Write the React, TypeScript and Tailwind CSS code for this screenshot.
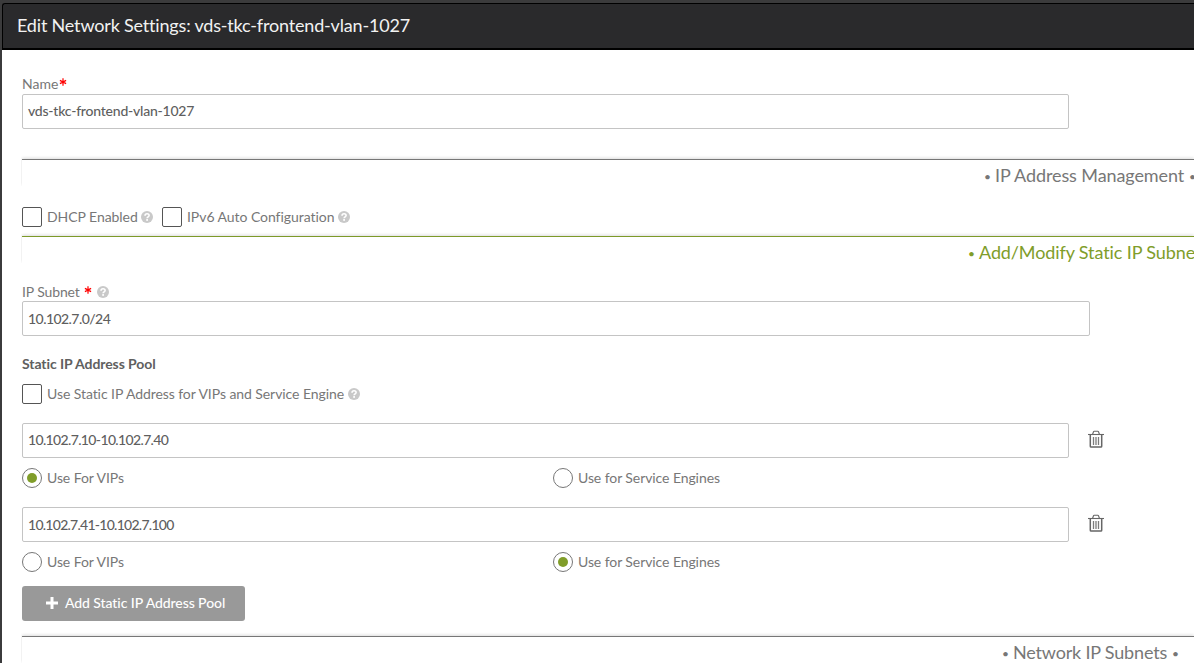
import type { ReactNode } from "react";

function Help({ className = "" }: { className?: string }) {
  return (
    <svg className={`h-[12px] w-[12px] shrink-0 ${className}`} viewBox="0 0 12 12">
      <circle cx="6" cy="6" r="6" fill="#c9c9c9" />
      <path d="M4 4.7C4.1 2.2 8.1 2.2 8.1 4.5C8.1 5.9 6.1 5.9 6.1 7.3" fill="none" stroke="#fff" strokeWidth="1.6" />
      <rect x="5.2" y="8.1" width="1.8" height="1.7" fill="#fff" />
    </svg>
  );
}

function Trash() {
  return (
    <svg className="mb-[3px] h-[18px] w-[16px] shrink-0" viewBox="0 0 16 18" fill="none" stroke="#666">
      <path d="M0 4.5H16" strokeWidth="1.1" />
      <path d="M4.6 4.2L5.5 1.8Q5.7 1.3 6.2 1.3H9.8Q10.3 1.3 10.5 1.8L11.4 4.2" strokeWidth="1.1" />
      <path d="M2.3 4.5V16.2Q2.3 17 3.1 17H12.9Q13.7 17 13.7 16.2V4.5" strokeWidth="1.5" />
      <path d="M5.5 7V15M8 7V15M10.5 7V15" strokeWidth="1.3" stroke="#7c7c7c" />
    </svg>
  );
}

function Asterisk({ className = "" }: { className?: string }) {
  return (
    <svg className={`h-[8px] w-[8px] shrink-0 ${className}`} viewBox="0 0 8 8" stroke="#f00" strokeWidth="1.2">
      <path d="M4 .3V7.7M.9 2.4L7.1 5.6M7.1 2.4L.9 5.6" />
    </svg>
  );
}

function Field({ value, className = "" }: { value: string; className?: string }) {
  return (
    <div className={`flex h-[35px] shrink-0 items-center rounded-[2px] border border-[#c4c4c4] bg-white pl-[5px] text-[14px] font-medium text-[#5f5f5f] ${className}`}>
      {value}
    </div>
  );
}

function Box() {
  return <span className="mr-[5px] h-[20px] w-[20px] shrink-0 rounded-[2px] border border-[#555] bg-white" />;
}

function Radio({ on, children, className = "" }: { on: boolean; children: ReactNode; className?: string }) {
  return (
    <div className={`flex shrink-0 items-center ${className}`}>
      <span className="mr-[5px] flex h-[20px] w-[20px] shrink-0 items-center justify-center rounded-full border border-[#777]">
        {on && <span className="h-[10px] w-[10px] rounded-full bg-[#809d2a]" />}
      </span>
      <span className="pb-[2px] tracking-[-0.08px]">{children}</span>
    </div>
  );
}

function Section({ children, className }: { children: ReactNode; className: string }) {
  return (
    <div className={`flex h-[27px] w-[1172px] shrink-0 border-t shadow-[0_-1px_3px_rgba(0,0,0,0.14)] [clip-path:inset(-5px_-5px_0px_-1px)] ${className}`}>
      <div className="flex h-[30px] shrink-0 items-center text-[18px] whitespace-nowrap">
        <span className="w-[11px] shrink-0 pt-[3px] text-[12px]">•</span>
        <span>{children}</span>
        <span className="ml-[5px] pt-[3px] text-[12px]">•</span>
      </div>
    </div>
  );
}

export default function App() {
  return (
    <div className="flex h-[663px] w-[1194px] flex-col overflow-hidden bg-[#3b3b3c] pt-[3px] pl-[2px] font-['Lato','Liberation_Sans',sans-serif] text-[14px] text-[#777] [font-variant-ligatures:none]">
      <header className="flex h-[47px] shrink-0 items-center rounded-tl-[3px] border-t border-b-2 border-l border-t-black border-b-black border-l-black bg-[#2a2a2c] pb-px pl-[14px] text-[18px] tracking-[-0.18px] text-[#f2f2f2]">
        Edit Network Settings: vds-tkc-frontend-vlan-1027
      </header>
      <main className="flex h-[613px] shrink-0 flex-col overflow-hidden bg-white pl-[20px] whitespace-nowrap">
        <div className="mt-[24px] flex h-[20px] shrink-0 items-center">
          <span className="pb-[2px]">Name</span>
          <Asterisk className="mb-[5px] ml-px" />
        </div>
        <Field value="vds-tkc-frontend-vlan-1027" className="w-[1047px] pb-[2px] tracking-[-0.22px]" />
        <Section className="mt-[30px] border-t-[#777] pl-[962px] tracking-[-0.1px]">IP Address Management</Section>
        <div className="mt-[21px] flex h-[20px] shrink-0 items-center">
          <Box />
          <span className="w-[94px] pb-[2px] tracking-[-0.05px]">DHCP Enabled</span>
          <Help className="mr-[9px]" />
          <Box />
          <span className="w-[151px] pb-[2px] tracking-[-0.05px]">IPv6 Auto Configuration</span>
          <Help />
        </div>
        <Section className="mt-[9px] border-t-[#7d9a29] pl-[946px] tracking-[-0.11px] text-[#809d2a]">Add/Modify Static IP Subnet</Section>
        <div className="mt-[19px] flex h-[19px] shrink-0 items-center">
          <span className="w-[62px] tracking-[-0.12px]">IP Subnet</span>
          <Asterisk className="mb-[4px]" />
          <Help className="ml-[5px]" />
        </div>
        <Field value="10.102.7.0/24" className="w-[1068px] tracking-[-0.55px]" />
        <div className="mt-[18px] flex h-[20px] shrink-0 items-center pb-[2px] font-bold tracking-[-0.08px] text-[#606060]">Static IP Address Pool</div>
        <div className="mt-[10px] flex h-[20px] shrink-0 items-center">
          <Box />
          <span className="w-[301px] pb-[2px] tracking-[-0.07px]">Use Static IP Address for VIPs and Service Engine</span>
          <Help />
        </div>
        <div className="mt-[19px] flex shrink-0 items-center gap-[19px]">
          <Field value="10.102.7.10-10.102.7.40" className="w-[1047px] pb-[2px] tracking-[-0.64px]" />
          <Trash />
        </div>
        <div className="mt-[10px] flex h-[20px] shrink-0">
          <Radio on={true} className="w-[531px]">Use For VIPs</Radio>
          <Radio on={false}>Use for Service Engines</Radio>
        </div>
        <div className="mt-[19px] flex shrink-0 items-center gap-[19px]">
          <Field value="10.102.7.41-10.102.7.100" className="w-[1047px] tracking-[-0.73px]" />
          <Trash />
        </div>
        <div className="mt-[10px] flex h-[20px] shrink-0">
          <Radio on={false} className="w-[531px]">Use For VIPs</Radio>
          <Radio on={true}>Use for Service Engines</Radio>
        </div>
        <button className="mt-[14px] flex h-[35px] w-[223px] shrink-0 items-center rounded-[3px] bg-[#999] pb-[2px] pl-[24px] font-medium tracking-[-0.08px] text-white">
          <svg className="mr-[7px] h-[12px] w-[12px]" viewBox="0 0 12 12" stroke="#fff" strokeWidth="3">
            <path d="M6 0V12M0 6H12" />
          </svg>
          Add Static IP Address Pool
        </button>
        <Section className="mt-[15px] border-t-[#777] pl-[980px] tracking-[-0.18px]">Network IP Subnets</Section>
      </main>
    </div>
  );
}
